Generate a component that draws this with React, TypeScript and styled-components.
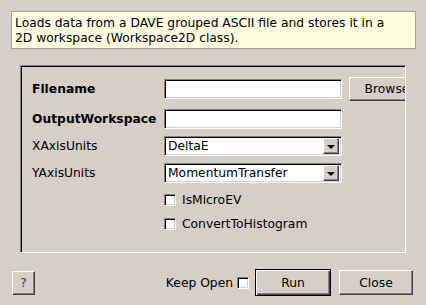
import { FunctionComponent } from "react";
import styled, { createGlobalStyle, css } from "styled-components";

const Global = createGlobalStyle`
  body {
    margin: 0;
    background: #d4d0c8;
    font-family: "DejaVu Sans", sans-serif;
    font-size: 12.3px;
    color: #000;
  }
`;

const Sunken = css`
  border-style: solid;
  border-width: 1px;
  border-color: #808080 #ffffff #ffffff #808080;
  box-shadow: inset 1px 1px 0 #000000, inset -1px -1px 0 #d4d0c8;
  box-sizing: border-box;
  background: #ffffff;
`;

const Raised = css`
  border-style: solid;
  border-width: 1px;
  border-color: #ffffff #404040 #404040 #ffffff;
  box-shadow: inset -1px -1px 0 #808080;
  box-sizing: border-box;
  background: #d4d0c8;
  font-family: "DejaVu Sans", sans-serif;
  font-size: 12.3px;
  color: #000;
  padding: 0;
`;

const Window = styled.div`
  width: 426px;
  height: 305px;
  box-sizing: border-box;
  padding-top: 11px;
  overflow: hidden;
`;

const Description = styled.div`
  margin-left: 11px;
  width: 405px;
  height: 38px;
  box-sizing: border-box;
  border: 1px solid #a0a0a0;
  background: #ffffe1;
  padding: 4px 3px 0 3px;
  line-height: 15px;
  white-space: nowrap;
`;

const Frame = styled.div`
  margin: 16px 0 0 20px;
  width: 386px;
  height: 188px;
  box-sizing: border-box;
  border-style: solid;
  border-width: 1px;
  border-color: #808080 #ffffff #ffffff #808080;
  box-shadow: inset 1px 1px 0 #000000;
  padding: 11px 0 0 11px;
  overflow: hidden;
  display: flex;
  flex-direction: column;
`;

const Row = styled.div<{ $top: number }>`
  display: flex;
  align-items: center;
  height: 24px;
  margin-top: ${(p) => p.$top}px;
`;

const Label = styled.div<{ $bold?: boolean }>`
  width: 132px;
  flex: none;
  font-weight: ${(p) => (p.$bold ? "bold" : "normal")};
  color: #000;
`;

const Field = styled.div`
  ${Sunken};
  width: 178px;
  height: 20px;
  flex: none;
`;

const Combo = styled.div`
  ${Sunken};
  width: 178px;
  height: 20px;
  flex: none;
  display: flex;
  align-items: center;
  padding-left: 3px;
`;

const ComboText = styled.span`
  flex: 1;
`;

const DropButton = styled.div`
  ${Raised};
  width: 16px;
  height: 16px;
  margin-right: 2px;
  display: flex;
  align-items: center;
  justify-content: center;
`;

const Arrow = styled.div`
  width: 0;
  height: 0;
  border-left: 4px solid transparent;
  border-right: 4px solid transparent;
  border-top: 4px solid #000;
  margin-top: 1px;
`;

const Button = styled.button<{ $w: number; $h: number }>`
  ${Raised};
  width: ${(p) => p.$w}px;
  height: ${(p) => p.$h}px;
  flex: none;
  white-space: nowrap;
`;

const DefaultButton = styled.button`
  ${Raised};
  width: 76px;
  height: 27px;
  border: 1px solid #000;
  box-shadow: inset 1px 1px 0 #ffffff, inset -1px -1px 0 #404040,
    inset -2px -2px 0 #808080;
  flex: none;
`;

const Box = styled.div`
  ${Sunken};
  width: 12px;
  height: 12px;
  flex: none;
`;

const Check = styled.label`
  display: flex;
  align-items: center;
  gap: 6px;
  margin-left: 132px;
`;

const Footer = styled.div`
  display: flex;
  align-items: center;
  margin-top: 16px;
  padding: 0 13px 0 12px;
  height: 27px;
`;

const Help = styled(Button)`
  color: #404040;
`;

const Spacer = styled.div`
  flex: 1;
`;

const KeepOpen = styled.span`
  margin-right: 4px;
`;

const ComboField: FunctionComponent<{ value: string }> = ({ value }) => (
  <Combo>
    <ComboText>{value}</ComboText>
    <DropButton>
      <Arrow />
    </DropButton>
  </Combo>
);

export default function App() {
  return (
    <Window>
      <Global />
      <Description>
        Loads data from a DAVE grouped ASCII file and stores it in a
        <br />
        2D workspace (Workspace2D class).
      </Description>
      <Frame>
        <Row $top={0}>
          <Label $bold>Filename</Label>
          <Field />
          <Button $w={76} $h={24} style={{ marginLeft: 7 }}>
            Browse
          </Button>
        </Row>
        <Row $top={6}>
          <Label $bold>OutputWorkspace</Label>
          <Field />
        </Row>
        <Row $top={3}>
          <Label>XAxisUnits</Label>
          <ComboField value="DeltaE" />
        </Row>
        <Row $top={3}>
          <Label>YAxisUnits</Label>
          <ComboField value="MomentumTransfer" />
        </Row>
        <Row $top={3}>
          <Check>
            <Box />
            IsMicroEV
          </Check>
        </Row>
        <Row $top={0}>
          <Check>
            <Box />
            ConvertToHistogram
          </Check>
        </Row>
      </Frame>
      <Footer>
        <Help $w={23} $h={24}>?</Help>
        <Spacer />
        <KeepOpen>Keep Open</KeepOpen>
        <Box />
        <DefaultButton style={{ marginLeft: 6 }}>Run</DefaultButton>
        <Button $w={74} $h={25} style={{ marginLeft: 8 }}>
          Close
        </Button>
      </Footer>
    </Window>
  );
}
